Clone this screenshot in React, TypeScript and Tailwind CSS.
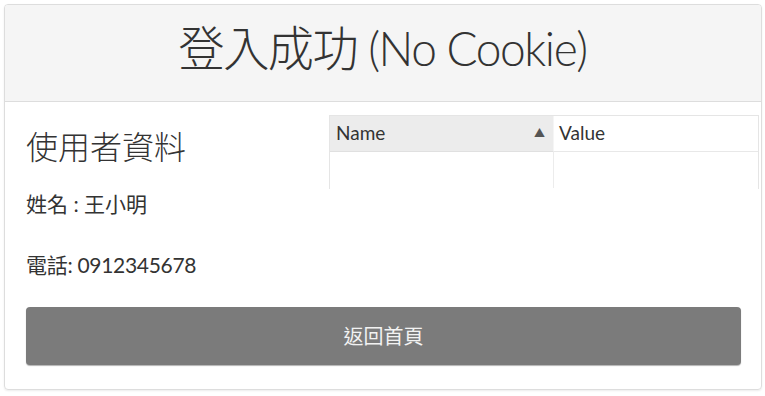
import React from 'react';

export default function App() {
  return (
    <div className="w-[765px] h-[396px] bg-white p-[4px] text-[#333]" style={{ fontFamily: "Lato, 'Noto Sans CJK TC', sans-serif" }}>
      <div className="w-[758px] h-[386px] border border-[#ddd] rounded-[4px] flex flex-col overflow-hidden shadow-[0_1px_2px_rgba(0,0,0,0.08)]">
        <div className="h-[97px] bg-[#f5f5f5] border-b border-[#ddd] flex items-center justify-center pb-[10px]">
          <h1 className="text-[48px] font-light tracking-[-1.5px] text-[#333] scale-x-[0.96]">登入成功 (No Cookie)</h1>
        </div>
        <div className="flex flex-1 pl-[21px] pt-[13px]">
          <div className="w-[303px] shrink-0 flex flex-col">
            <h2 className="text-[32px] font-light mt-[12px] leading-[40px]">使用者資料</h2>
            <p className="text-[21px] mt-[22px] leading-[30px]">姓名 : 王小明</p>
            <p className="text-[21px] mt-[31px] leading-[30px] tracking-[-0.3px]">電話: 0912345678</p>
          </div>
          <div className="w-[430px] shrink-0 flex flex-col">
            <div className="w-[430px] h-[74px] border-t border-l border-r border-[#e5e5e5] grid grid-cols-[224px_1fr] grid-rows-[36px_36px]">
              <div className="bg-[#ececec] flex items-center justify-between pl-[6px] pr-[8px] border-b border-[#e0e0e0] border-r border-r-[#f5f5f5] text-[19px]">
                <span>Name</span>
                <span className="text-[11px] text-[#555]">▲</span>
              </div>
              <div className="flex items-center px-[5px] border-b border-[#e8e8e8] text-[19px]">Value</div>
              <div className="border-r border-[#ececec]"></div>
              <div></div>
            </div>
          </div>
        </div>
        <div className="px-[21px] pb-[24px]">
          <button className="w-[715px] h-[58px] rounded-[4px] bg-[#7b7b7b] text-[#f2f2f2] text-[20px] flex items-center justify-center shadow-[0_1px_1px_rgba(0,0,0,0.3)]">返回首頁</button>
        </div>
      </div>
    </div>
  );
}
